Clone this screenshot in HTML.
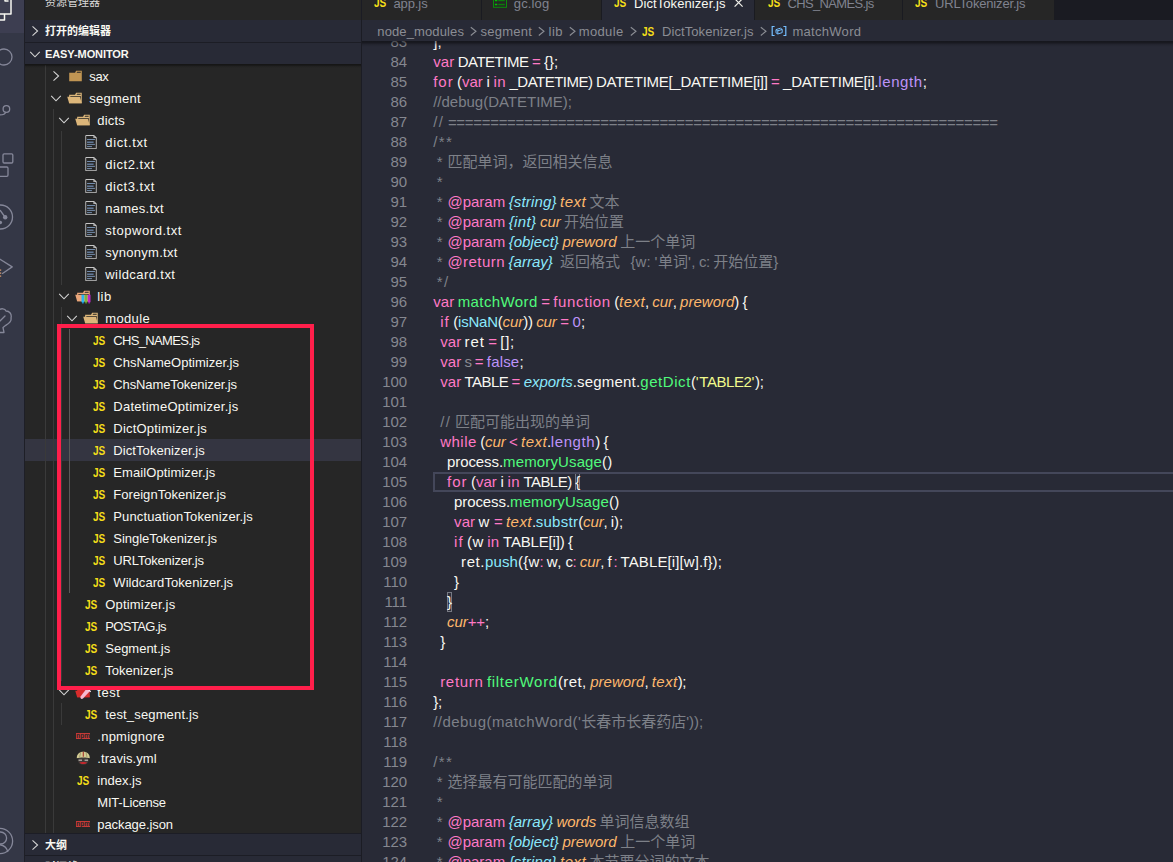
<!DOCTYPE html>
<html><head><meta charset="utf-8"><title>DictTokenizer.js - easy-monitor</title>
<style>
html,body{margin:0;padding:0}
body{width:1173px;height:862px;overflow:hidden;position:relative;background:#282a36;font-family:'Liberation Sans','Noto Sans CJK SC',sans-serif;color:#f8f8f2}
div,span,svg{position:absolute;box-sizing:border-box}
span{white-space:pre;top:0}
#act{left:0;top:0;width:24px;height:862px;background:#343746;overflow:hidden}
#actsel{left:0;top:0;width:24px;height:33px;background:#3d3e51}
#sb{left:24px;top:0;width:338px;height:862px;background:#262626;border-left:1px solid #1e1f27;border-right:1px solid #1b1c24;overflow:hidden}
.ph{left:0;width:336px;background:#282a36;font-size:11px;font-weight:bold;line-height:22px;height:22px}
.sep{left:0;width:336px;height:1px;background:#1c1d25}
#tree{left:0;top:65px;width:336px;height:768px;overflow:hidden}
.row{left:0;width:336px;height:22px;font-size:13px;line-height:22px}
.sel{background:#343541}
.g{width:1px;background:#3a3a3a}
.ga{width:1px;background:#5a5a5a}
.js{font-weight:bold;color:#f5de19;font-size:12px;transform:scaleX(.84);transform-origin:0 50%;top:.6px}
.tab span{top:1px}
.lb{top:1px}
.npm{background:#c63a38;color:#262626;font-size:6.5px;font-weight:bold;line-height:5px;height:5.6px;width:14.2px;text-align:center;letter-spacing:0}
#bc .js{top:-.5px}
#ed{left:362px;top:0;width:811px;height:862px;overflow:hidden;background:#282a36}
.ln{left:0;width:811px;height:20px;font-size:15px;line-height:20px}
.no{color:#858790;text-align:right}
.k{color:#ff79c6}.g2{color:#50fa7b}.c{color:#8be9fd}.ci{color:#8be9fd;font-style:italic}.o{color:#ffb86c;font-style:italic}
.u{color:#bd93f9}.y{color:#f1fa8c}.yq{color:#e9f284}.m{color:#7d8088}.me{color:#7d8088;top:1.4px}.d{color:#8a8c93}.p{color:#f8f8f2}
.bm{top:0;height:20px;border:1px solid #777983;background:rgba(255,255,255,.03)}
.cur{top:1px;width:2px;height:18px;background:#e8e8e0}
#cl{width:760px;height:20px;border:2px solid #44475a;border-right:0}
#tabs{left:0;top:0;width:811px;height:20px;background:#1a1b22;overflow:hidden}
.tab{top:-15px;height:35px;background:#262626;font-size:13px;line-height:35px;color:#80838f;border-right:1px solid #1a1b21}
.act{background:#282a36;color:#f8f8f2}
#bc{left:0;top:20px;width:811px;height:21px;background:#282a36;font-size:13px;line-height:24px;color:#8b8d94}
.sh{height:6px;background:linear-gradient(rgba(0,0,0,.46),rgba(0,0,0,.40) 28%,rgba(0,0,0,.13) 60%,rgba(0,0,0,0))}
#red{left:57px;top:324px;width:257px;height:366px;border:4px solid #ff1f4b}
</style></head><body>
<div id='act'><div id='actsel'></div><svg width="24" height="862" viewBox="0 0 24 862" style="left:0;top:0" fill="none" stroke-linecap="round" stroke-linejoin="round">
<g stroke="#f8f8f2" stroke-width="1.5">
<path d="M5 -2 L5 1 L8 1 M11 -2 L11 14 L-2 14"/>
<path d="M4.5 14.5 L4.5 20 L-2 20"/>
</g>
<g stroke="#858799" stroke-width="1.3">
<circle cx="4" cy="57" r="8"/>
<circle cx="6.4" cy="109" r="3.3"/>
<path d="M5.6 112.3 C5 114.5 3 115 -2 115"/>
<rect x="3" y="153.8" width="9.8" height="9.2" rx="1.2"/>
<rect x="-4" y="167" width="12" height="9.3" rx="1.2"/>
<circle cx="0.5" cy="217" r="12"/>
<path d="M5 217 L0.3 210.5"/>
<path d="M-2 258 L12.2 266.9 L2.5 273.5"/>
<path d="M-1 310 C1 308 5 308.5 6 311 C9.5 311 12 314 11 318 C12 322 8 324 5.5 325.5 L3 327.5 L4 332.5 L-2 332.5"/>
<path d="M0 321 L5 316"/>
<circle cx="0" cy="841" r="12.6"/>
<circle cx="0.6" cy="838" r="6"/>
<path d="M-2 844.6 C3 844.6 6.5 847 7.8 851.5"/>
</g>
<g fill="#858799" stroke="none"><circle cx="5.2" cy="217.2" r="2.2"/><circle cx="0.3" cy="222.5" r="1.8"/></g>
<g fill="#e0a070" stroke="none"><rect x="0" y="269.5" width="1.2" height="1.2"/><rect x="0" y="272.5" width="1.2" height="1.2"/><rect x="0" y="275.5" width="1.2" height="1.2"/></g>
</svg></div>
<div id='sb'><span style='left:20px;top:-9px;font-size:11px;line-height:22px;color:#d8d8d8'>资源管理器</span>
<div class='ph' style='top:20px'><svg style='left:2px;top:3px' width='16' height='16' viewBox='0 0 16 16' fill='none' stroke='#d6d6d6' stroke-width='1.05'><path d='M5.5 3.3 L10.6 8 L5.5 12.7'/></svg><span style='left:20px'>打开的编辑器</span></div>
<div class='sep' style='top:42px'></div><div id='tree'><div class='row' style='top:0px'><svg style='left:23px;top:3px' width='16' height='16' viewBox='0 0 16 16' fill='none' stroke='#d6d6d6' stroke-width='1.05'><path d='M5.5 3.3 L10.6 8 L5.5 12.7'/></svg><svg style='left:41.5px;top:3px' width='16' height='16' viewBox='0 0 32 32'><path d='M27.5,5.5H18.2L16.1,9.7H4.4V26.5H29.6V5.5Zm0,4.2H19.3l1.1-2.1h7.1Z' fill='#c09553'/></svg><span class='lb' style='left:64.3px;letter-spacing:-0.42px;'>sax</span></div>
<div class='row' style='top:22px'><svg style='left:23px;top:3px' width='16' height='16' viewBox='0 0 16 16' fill='none' stroke='#d6d6d6' stroke-width='1.05'><path d='M3.2 5.9 L8 10.8 L12.8 5.9'/></svg><svg style='left:41.5px;top:3px' width='16' height='16' viewBox='0 0 32 32'><path d='M27.4,5.5H18.2L16.1,9.7H4.3V26.5H29.5V5.5Zm0,18.7H6.6V11.8H27.4Zm0-14.5H19.2l1-2.1h7.1V9.7Z' fill='#dcb67a'/><polygon points='25.7 13.7 0.5 13.7 4.3 26.5 29.5 26.5 25.7 13.7' fill='#dcb67a'/></svg><span class='lb' style='left:64.3px;letter-spacing:0.23px;'>segment</span></div>
<div class='row' style='top:44px'><svg style='left:31px;top:3px' width='16' height='16' viewBox='0 0 16 16' fill='none' stroke='#d6d6d6' stroke-width='1.05'><path d='M3.2 5.9 L8 10.8 L12.8 5.9'/></svg><svg style='left:49.5px;top:3px' width='16' height='16' viewBox='0 0 32 32'><path d='M27.4,5.5H18.2L16.1,9.7H4.3V26.5H29.5V5.5Zm0,18.7H6.6V11.8H27.4Zm0-14.5H19.2l1-2.1h7.1V9.7Z' fill='#dcb67a'/><polygon points='25.7 13.7 0.5 13.7 4.3 26.5 29.5 26.5 25.7 13.7' fill='#dcb67a'/></svg><span class='lb' style='left:72.3px;letter-spacing:0.19px;'>dicts</span></div>
<div class='row' style='top:66px'><svg style='left:57.5px;top:3px' width='16' height='16' viewBox='0 0 32 32'><path d='M22.038,2H6.375a1.755,1.755,0,0,0-1.75,1.75v24.5A1.755,1.755,0,0,0,6.375,30h19.25a1.755,1.755,0,0,0,1.75-1.75V6.856Zm.525,2.844,1.663,1.531H22.563ZM6.375,28.25V3.75H20.813V8.125h4.813V28.25Z' fill='#c5c5c5'/><rect x='8.125' y='15.097' width='13.076' height='2.6' fill='#6f89ad'/><rect x='8.125' y='24.439' width='9.762' height='1.75' fill='#829ec2'/><rect x='8.125' y='19.763' width='15.75' height='1.75' fill='#829ec2'/><rect x='8.125' y='10.23' width='15.75' height='1.75' fill='#829ec2'/></svg><span class='lb' style='left:80.3px;letter-spacing:0.61px;'>dict.txt</span></div>
<div class='row' style='top:88px'><svg style='left:57.5px;top:3px' width='16' height='16' viewBox='0 0 32 32'><path d='M22.038,2H6.375a1.755,1.755,0,0,0-1.75,1.75v24.5A1.755,1.755,0,0,0,6.375,30h19.25a1.755,1.755,0,0,0,1.75-1.75V6.856Zm.525,2.844,1.663,1.531H22.563ZM6.375,28.25V3.75H20.813V8.125h4.813V28.25Z' fill='#c5c5c5'/><rect x='8.125' y='15.097' width='13.076' height='2.6' fill='#6f89ad'/><rect x='8.125' y='24.439' width='9.762' height='1.75' fill='#829ec2'/><rect x='8.125' y='19.763' width='15.75' height='1.75' fill='#829ec2'/><rect x='8.125' y='10.23' width='15.75' height='1.75' fill='#829ec2'/></svg><span class='lb' style='left:80.3px;letter-spacing:0.54px;'>dict2.txt</span></div>
<div class='row' style='top:110px'><svg style='left:57.5px;top:3px' width='16' height='16' viewBox='0 0 32 32'><path d='M22.038,2H6.375a1.755,1.755,0,0,0-1.75,1.75v24.5A1.755,1.755,0,0,0,6.375,30h19.25a1.755,1.755,0,0,0,1.75-1.75V6.856Zm.525,2.844,1.663,1.531H22.563ZM6.375,28.25V3.75H20.813V8.125h4.813V28.25Z' fill='#c5c5c5'/><rect x='8.125' y='15.097' width='13.076' height='2.6' fill='#6f89ad'/><rect x='8.125' y='24.439' width='9.762' height='1.75' fill='#829ec2'/><rect x='8.125' y='19.763' width='15.75' height='1.75' fill='#829ec2'/><rect x='8.125' y='10.23' width='15.75' height='1.75' fill='#829ec2'/></svg><span class='lb' style='left:80.3px;letter-spacing:0.54px;'>dict3.txt</span></div>
<div class='row' style='top:132px'><svg style='left:57.5px;top:3px' width='16' height='16' viewBox='0 0 32 32'><path d='M22.038,2H6.375a1.755,1.755,0,0,0-1.75,1.75v24.5A1.755,1.755,0,0,0,6.375,30h19.25a1.755,1.755,0,0,0,1.75-1.75V6.856Zm.525,2.844,1.663,1.531H22.563ZM6.375,28.25V3.75H20.813V8.125h4.813V28.25Z' fill='#c5c5c5'/><rect x='8.125' y='15.097' width='13.076' height='2.6' fill='#6f89ad'/><rect x='8.125' y='24.439' width='9.762' height='1.75' fill='#829ec2'/><rect x='8.125' y='19.763' width='15.75' height='1.75' fill='#829ec2'/><rect x='8.125' y='10.23' width='15.75' height='1.75' fill='#829ec2'/></svg><span class='lb' style='left:80.3px;letter-spacing:0.25px;'>names.txt</span></div>
<div class='row' style='top:154px'><svg style='left:57.5px;top:3px' width='16' height='16' viewBox='0 0 32 32'><path d='M22.038,2H6.375a1.755,1.755,0,0,0-1.75,1.75v24.5A1.755,1.755,0,0,0,6.375,30h19.25a1.755,1.755,0,0,0,1.75-1.75V6.856Zm.525,2.844,1.663,1.531H22.563ZM6.375,28.25V3.75H20.813V8.125h4.813V28.25Z' fill='#c5c5c5'/><rect x='8.125' y='15.097' width='13.076' height='2.6' fill='#6f89ad'/><rect x='8.125' y='24.439' width='9.762' height='1.75' fill='#829ec2'/><rect x='8.125' y='19.763' width='15.75' height='1.75' fill='#829ec2'/><rect x='8.125' y='10.23' width='15.75' height='1.75' fill='#829ec2'/></svg><span class='lb' style='left:80.3px;letter-spacing:0.55px;'>stopword.txt</span></div>
<div class='row' style='top:176px'><svg style='left:57.5px;top:3px' width='16' height='16' viewBox='0 0 32 32'><path d='M22.038,2H6.375a1.755,1.755,0,0,0-1.75,1.75v24.5A1.755,1.755,0,0,0,6.375,30h19.25a1.755,1.755,0,0,0,1.75-1.75V6.856Zm.525,2.844,1.663,1.531H22.563ZM6.375,28.25V3.75H20.813V8.125h4.813V28.25Z' fill='#c5c5c5'/><rect x='8.125' y='15.097' width='13.076' height='2.6' fill='#6f89ad'/><rect x='8.125' y='24.439' width='9.762' height='1.75' fill='#829ec2'/><rect x='8.125' y='19.763' width='15.75' height='1.75' fill='#829ec2'/><rect x='8.125' y='10.23' width='15.75' height='1.75' fill='#829ec2'/></svg><span class='lb' style='left:80.3px;letter-spacing:0.27px;'>synonym.txt</span></div>
<div class='row' style='top:198px'><svg style='left:57.5px;top:3px' width='16' height='16' viewBox='0 0 32 32'><path d='M22.038,2H6.375a1.755,1.755,0,0,0-1.75,1.75v24.5A1.755,1.755,0,0,0,6.375,30h19.25a1.755,1.755,0,0,0,1.75-1.75V6.856Zm.525,2.844,1.663,1.531H22.563ZM6.375,28.25V3.75H20.813V8.125h4.813V28.25Z' fill='#c5c5c5'/><rect x='8.125' y='15.097' width='13.076' height='2.6' fill='#6f89ad'/><rect x='8.125' y='24.439' width='9.762' height='1.75' fill='#829ec2'/><rect x='8.125' y='19.763' width='15.75' height='1.75' fill='#829ec2'/><rect x='8.125' y='10.23' width='15.75' height='1.75' fill='#829ec2'/></svg><span class='lb' style='left:80.3px;letter-spacing:0.42px;'>wildcard.txt</span></div>
<div class='row' style='top:220px'><svg style='left:31px;top:3px' width='16' height='16' viewBox='0 0 16 16' fill='none' stroke='#d6d6d6' stroke-width='1.05'><path d='M3.2 5.9 L8 10.8 L12.8 5.9'/></svg><svg style='left:49.5px;top:3px' width='16' height='16' viewBox='0 0 32 32'><path d='M27.4,5.5H18.2L16.1,9.7H4.3V26.5H29.5V5.5Zm0,18.7H6.6V11.8H27.4Zm0-14.5H19.2l1-2.1h7.1V9.7Z' fill='#eaa67a'/><polygon points='25.7 13.7 0.5 13.7 4.3 26.5 29.5 26.5 25.7 13.7' fill='#eaa67a'/><rect x='13' y='13.5' width='5.6' height='15' fill='#29b6f6'/><rect x='19.4' y='13.5' width='5.4' height='15' fill='#7cb342'/><rect x='25.6' y='13.5' width='5.4' height='15' fill='#c026c9'/><rect x='14.3' y='28' width='3' height='3' fill='#1e9fe0'/><rect x='20.6' y='28' width='3' height='3' fill='#62a030'/><rect x='26.8' y='28' width='3' height='3' fill='#a320ab'/></svg><span class='lb' style='left:72.3px;letter-spacing:0.41px;'>lib</span></div>
<div class='row' style='top:242px'><svg style='left:39px;top:3px' width='16' height='16' viewBox='0 0 16 16' fill='none' stroke='#d6d6d6' stroke-width='1.05'><path d='M3.2 5.9 L8 10.8 L12.8 5.9'/></svg><svg style='left:57.5px;top:3px' width='16' height='16' viewBox='0 0 32 32'><path d='M27.4,5.5H18.2L16.1,9.7H4.3V26.5H29.5V5.5Zm0,18.7H6.6V11.8H27.4Zm0-14.5H19.2l1-2.1h7.1V9.7Z' fill='#dcb67a'/><polygon points='25.7 13.7 0.5 13.7 4.3 26.5 29.5 26.5 25.7 13.7' fill='#dcb67a'/></svg><span class='lb' style='left:80.3px;letter-spacing:0.34px;'>module</span></div>
<div class='row' style='top:264px'><span class='js' style='left:67.7px'>JS</span><span class='lb' style='left:88.3px;letter-spacing:-0.66px;'>CHS_NAMES.js</span></div>
<div class='row' style='top:286px'><span class='js' style='left:67.7px'>JS</span><span class='lb' style='left:88.3px;'>ChsNameOptimizer.js</span></div>
<div class='row' style='top:308px'><span class='js' style='left:67.7px'>JS</span><span class='lb' style='left:88.3px;letter-spacing:-0.11px;'>ChsNameTokenizer.js</span></div>
<div class='row' style='top:330px'><span class='js' style='left:67.7px'>JS</span><span class='lb' style='left:88.3px;letter-spacing:0.26px;'>DatetimeOptimizer.js</span></div>
<div class='row' style='top:352px'><span class='js' style='left:67.7px'>JS</span><span class='lb' style='left:88.3px;letter-spacing:0.21px;'>DictOptimizer.js</span></div>
<div class='row sel' style='top:374px'><span class='js' style='left:67.7px'>JS</span><span class='lb' style='left:88.3px;letter-spacing:0.08px;'>DictTokenizer.js</span></div>
<div class='row' style='top:396px'><span class='js' style='left:67.7px'>JS</span><span class='lb' style='left:88.3px;letter-spacing:0.09px;'>EmailOptimizer.js</span></div>
<div class='row' style='top:418px'><span class='js' style='left:67.7px'>JS</span><span class='lb' style='left:88.3px;letter-spacing:0.04px;'>ForeignTokenizer.js</span></div>
<div class='row' style='top:440px'><span class='js' style='left:67.7px'>JS</span><span class='lb' style='left:88.3px;letter-spacing:0.13px;'>PunctuationTokenizer.js</span></div>
<div class='row' style='top:462px'><span class='js' style='left:67.7px'>JS</span><span class='lb' style='left:88.3px;letter-spacing:-0.02px;'>SingleTokenizer.js</span></div>
<div class='row' style='top:484px'><span class='js' style='left:67.7px'>JS</span><span class='lb' style='left:88.3px;letter-spacing:-0.17px;'>URLTokenizer.js</span></div>
<div class='row' style='top:506px'><span class='js' style='left:67.7px'>JS</span><span class='lb' style='left:88.3px;letter-spacing:0.07px;'>WildcardTokenizer.js</span></div>
<div class='row' style='top:528px'><span class='js' style='left:59.7px'>JS</span><span class='lb' style='left:80.3px;letter-spacing:0.18px;'>Optimizer.js</span></div>
<div class='row' style='top:550px'><span class='js' style='left:59.7px'>JS</span><span class='lb' style='left:80.3px;letter-spacing:-0.62px;'>POSTAG.js</span></div>
<div class='row' style='top:572px'><span class='js' style='left:59.7px'>JS</span><span class='lb' style='left:80.3px;letter-spacing:-0.02px;'>Segment.js</span></div>
<div class='row' style='top:594px'><span class='js' style='left:59.7px'>JS</span><span class='lb' style='left:80.3px;letter-spacing:0.01px;'>Tokenizer.js</span></div>
<div class='row' style='top:616px'><svg style='left:31px;top:3px' width='16' height='16' viewBox='0 0 16 16' fill='none' stroke='#d6d6d6' stroke-width='1.05'><path d='M3.2 5.9 L8 10.8 L12.8 5.9'/></svg><svg style='left:49.5px;top:3px' width='16' height='16' viewBox='0 0 32 32'><path d='M27.4,5.5H18.2L16.1,9.7H4.3V26.5H29.5V5.5Z' fill='#d32f2f'/><polygon points='25.7 13.7 0.5 13.7 4.3 26.5 29.5 26.5 25.7 13.7' fill='#d92b2b'/><path d='M24 8 L30 14 L16 29 C13 31.5 9 28 11.5 24.5 Z' fill='#f8bbd0'/><path d='M22 6 L31.5 15.5' stroke='#fce4ec' stroke-width='2.4'/></svg><span class='lb' style='left:72.3px;letter-spacing:0.54px;'>test</span></div>
<div class='row' style='top:638px'><span class='js' style='left:59.7px'>JS</span><span class='lb' style='left:80.3px;letter-spacing:0.15px;'>test_segment.js</span></div>
<div class='row' style='top:660px'><span class='npm' style='left:51.0px;top:8.2px'>npm</span><span class='lb' style='left:72.3px;letter-spacing:0.25px;'>.npmignore</span></div>
<div class='row' style='top:682px'><svg style='left:49.5px;top:3px' width='16' height='16' viewBox='0 0 16 16'><ellipse cx='8.3' cy='10.2' rx='5.4' ry='4.6' fill='#3f3a38'/><path d='M1.8 8.3 C1.6 4.2 4.4 1.7 8.3 1.7 C12.2 1.7 15 4.2 14.8 8.3 C12 7.2 4.6 7.2 1.8 8.3 Z' fill='#d3cb93'/><path d='M8.3 1.7 V6.8' stroke='#a8372c' stroke-width='1.1'/><path d='M5.6 2.4 L4.6 7.2 M11 2.4 L12 7.2' stroke='#8d875f' stroke-width='.7'/><path d='M3.6 9.4 h3.4 v1.6 h-3.4z M9.6 9.4 h3.4 v1.6 h-3.4z' fill='#a39f9a'/><path d='M4.6 12.6 C6 11.9 10.6 11.9 12 12.6 C11 14.6 5.6 14.6 4.6 12.6Z' fill='#c4272d'/></svg><span class='lb' style='left:72.3px;letter-spacing:0.08px;'>.travis.yml</span></div>
<div class='row' style='top:704px'><span class='js' style='left:51.7px'>JS</span><span class='lb' style='left:72.3px;letter-spacing:0.01px;'>index.js</span></div>
<div class='row' style='top:726px'><span class='lb' style='left:72.3px;letter-spacing:-0.20px;'>MIT-License</span></div>
<div class='row' style='top:748px'><span class='npm' style='left:51.0px;top:8.2px'>npm</span><span class='lb' style='left:72.3px;letter-spacing:-0.08px;'>package.json</span></div>
<div class='g' style='left:20px;top:0px;height:770px'></div><div class='g' style='left:28px;top:44px;height:726px'></div><div class='g' style='left:36px;top:66px;height:154px'></div><div class='g' style='left:36px;top:242px;height:374px'></div><div class='g' style='left:36px;top:638px;height:22px'></div><div class='ga' style='left:44px;top:264px;height:264px'></div></div>
<div class='ph' style='top:43px;height:21px'><svg style='left:2px;top:3px' width='16' height='16' viewBox='0 0 16 16' fill='none' stroke='#d6d6d6' stroke-width='1.05'><path d='M3.2 5.9 L8 10.8 L12.8 5.9'/></svg><span style='left:20.0px;letter-spacing:-0.09px;'>EASY-MONITOR</span></div><div class='sh' style='left:0;top:64px;width:336px;height:4px'></div>
<div class='sep' style='top:833px'></div><div class='ph' style='top:834px'><svg style='left:2px;top:3px' width='16' height='16' viewBox='0 0 16 16' fill='none' stroke='#d6d6d6' stroke-width='1.05'><path d='M5.5 3.3 L10.6 8 L5.5 12.7'/></svg><span style='left:20px'>大纲</span></div>
<div class='sep' style='top:855px'></div><div class='ph' style='top:856px'><svg style='left:2px;top:3px' width='16' height='16' viewBox='0 0 16 16' fill='none' stroke='#d6d6d6' stroke-width='1.05'><path d='M5.5 3.3 L10.6 8 L5.5 12.7'/></svg><span style='left:20px'>时间线</span></div>
</div>
<div id='ed'><div class='ln' style='top:32px'><span class='no' style='left:0;width:45.2px'>83</span><span class='p' style='left:71.2px;letter-spacing:0.11px'>];</span></div>
<div class='ln' style='top:52px'><span class='no' style='left:0;width:45.2px'>84</span><span class='k' style='left:71.2px;letter-spacing:0.05px'>var </span><span class='p' style='left:95.7px;letter-spacing:-0.50px'>DATETIME </span><span class='k' style='left:169.9px;letter-spacing:-0.18px'>= </span><span class='p' style='left:182.0px;letter-spacing:0.05px'>{};</span></div>
<div class='ln' style='top:72px'><span class='no' style='left:0;width:45.2px'>85</span><span class='k' style='left:71.2px;letter-spacing:0.98px'>for </span><span class='p' style='left:95.1px;letter-spacing:-0.20px'>(</span><span class='k' style='left:99.9px;letter-spacing:0.05px'>var </span><span class='p' style='left:124.4px;letter-spacing:0.36px'>i </span><span class='k' style='left:131.6px;letter-spacing:0.35px'>in </span><span class='p' style='left:147.5px;letter-spacing:-0.51px'>_DATETIME) </span><span class='p' style='left:234.0px;letter-spacing:-0.28px'>DATETIME[_DATETIME[i]] </span><span class='k' style='left:409.1px;letter-spacing:-0.18px'>= </span><span class='p' style='left:421.1px;letter-spacing:-0.29px'>_DATETIME[i].</span><span class='u' style='left:516.3px;letter-spacing:0.60px'>length</span><span class='p' style='left:560.7px;letter-spacing:-0.42px'>;</span></div>
<div class='ln' style='top:92px'><span class='no' style='left:0;width:45.2px'>86</span><span class='m' style='left:71.2px;letter-spacing:-0.01px'>//debug(DATETIME);</span></div>
<div class='ln' style='top:112px'><span class='no' style='left:0;width:45.2px'>87</span><span class='m' style='left:71.2px;letter-spacing:1.43px'>// </span><span class='me' style='left:85.9px;letter-spacing:-0.30px'>=================================================================</span></div>
<div class='ln' style='top:132px'><span class='no' style='left:0;width:45.2px'>88</span><span class='m' style='left:71.2px;letter-spacing:1.40px'>/**</span></div>
<div class='ln' style='top:152px'><span class='no' style='left:0;width:45.2px'>89</span><span class='m' style='left:74.7px;letter-spacing:1.40px'>* </span><span class='m' style='left:85.4px;'>匹配单词，返回相关信息</span></div>
<div class='ln' style='top:172px'><span class='no' style='left:0;width:45.2px'>90</span><span class='m' style='left:74.7px;letter-spacing:1.40px'>*</span></div>
<div class='ln' style='top:192px'><span class='no' style='left:0;width:45.2px'>91</span><span class='m' style='left:74.7px;letter-spacing:1.40px'>* </span><span class='k' style='left:85.4px;letter-spacing:0.01px'>@param </span><span class='ci' style='left:146.7px;letter-spacing:0.16px'>{string} </span><span class='o' style='left:198.1px;letter-spacing:0.44px'>text </span><span class='m' style='left:227.6px;'>文本</span></div>
<div class='ln' style='top:212px'><span class='no' style='left:0;width:45.2px'>92</span><span class='m' style='left:74.7px;letter-spacing:1.40px'>* </span><span class='k' style='left:85.4px;letter-spacing:0.01px'>@param </span><span class='ci' style='left:146.7px;letter-spacing:0.39px'>{int} </span><span class='o' style='left:178.0px;letter-spacing:-0.09px'>cur </span><span class='m' style='left:202.0px;'>开始位置</span></div>
<div class='ln' style='top:232px'><span class='no' style='left:0;width:45.2px'>93</span><span class='m' style='left:74.7px;letter-spacing:1.40px'>* </span><span class='k' style='left:85.4px;letter-spacing:0.01px'>@param </span><span class='ci' style='left:146.7px;letter-spacing:0.02px'>{object} </span><span class='o' style='left:200.4px;letter-spacing:0.01px'>preword </span><span class='m' style='left:258.2px;'>上一个单词</span></div>
<div class='ln' style='top:252px'><span class='no' style='left:0;width:45.2px'>94</span><span class='m' style='left:74.7px;letter-spacing:1.40px'>* </span><span class='k' style='left:85.4px;letter-spacing:0.46px'>@return </span><span class='ci' style='left:146.5px;letter-spacing:0.03px'>{array} </span><span class='m' style='left:197.9px;'>返回格式</span><span class='m' style='left:268.4px;letter-spacing:0.17px'>{w: </span><span class='m' style='left:292.4px;letter-spacing:0.80px'>&#x27;</span><span class='m' style='left:296.1px;'>单词</span><span class='m' style='left:326.1px;letter-spacing:0.19px'>&#x27;, </span><span class='m' style='left:337.0px;letter-spacing:-0.42px'>c: </span><span class='m' style='left:351.3px;'>开始位置</span><span class='m' style='left:411.3px;letter-spacing:-0.06px'>}</span></div>
<div class='ln' style='top:272px'><span class='no' style='left:0;width:45.2px'>95</span><span class='m' style='left:74.7px;letter-spacing:1.41px'>*/</span></div>
<div class='ln' style='top:292px'><span class='no' style='left:0;width:45.2px'>96</span><span class='k' style='left:71.2px;letter-spacing:0.05px'>var </span><span class='g2' style='left:95.7px;letter-spacing:0.40px'>matchWord </span><span class='k' style='left:179.2px;letter-spacing:-0.18px'>= </span><span class='k' style='left:191.3px;letter-spacing:0.62px'>function </span><span class='p' style='left:252.3px;letter-spacing:-0.20px'>(</span><span class='o' style='left:257.1px;letter-spacing:0.44px'>text</span><span class='p' style='left:283.0px;letter-spacing:-0.42px'>, </span><span class='o' style='left:290.3px;letter-spacing:-0.09px'>cur</span><span class='p' style='left:310.8px;letter-spacing:-0.42px'>, </span><span class='o' style='left:318.1px;letter-spacing:0.01px'>preword</span><span class='p' style='left:372.3px;letter-spacing:-0.20px'>) </span><span class='p' style='left:380.6px;letter-spacing:-0.06px'>{</span></div>
<div class='ln' style='top:312px'><span class='no' style='left:0;width:45.2px'>97</span><span class='k' style='left:78.2px;letter-spacing:1.00px'>if </span><span class='p' style='left:91.2px;letter-spacing:-0.20px'>(</span><span class='c' style='left:96.0px;letter-spacing:-0.20px'>isNaN</span><span class='p' style='left:135.8px;letter-spacing:-0.20px'>(</span><span class='o' style='left:140.6px;letter-spacing:-0.09px'>cur</span><span class='p' style='left:161.2px;letter-spacing:-0.21px'>)) </span><span class='o' style='left:174.2px;letter-spacing:-0.09px'>cur </span><span class='k' style='left:198.3px;letter-spacing:-0.18px'>= </span><span class='u' style='left:210.4px;letter-spacing:0.24px'>0</span><span class='p' style='left:219.0px;letter-spacing:-0.42px'>;</span></div>
<div class='ln' style='top:332px'><span class='no' style='left:0;width:45.2px'>98</span><span class='k' style='left:78.2px;letter-spacing:0.05px'>var </span><span class='p' style='left:102.6px;letter-spacing:0.87px'>ret </span><span class='k' style='left:126.3px;letter-spacing:-0.18px'>= </span><span class='p' style='left:138.3px;letter-spacing:0.70px'>[];</span></div>
<div class='ln' style='top:352px'><span class='no' style='left:0;width:45.2px'>99</span><span class='k' style='left:78.2px;letter-spacing:0.05px'>var </span><span class='d' style='left:102.6px;letter-spacing:-0.89px'>s </span><span class='k' style='left:112.7px;letter-spacing:-0.18px'>= </span><span class='u' style='left:124.8px;letter-spacing:0.18px'>false</span><span class='p' style='left:157.4px;letter-spacing:-0.42px'>;</span></div>
<div class='ln' style='top:372px'><span class='no' style='left:0;width:45.2px'>100</span><span class='k' style='left:78.2px;letter-spacing:0.05px'>var </span><span class='p' style='left:102.6px;letter-spacing:-0.59px'>TABLE </span><span class='k' style='left:149.6px;letter-spacing:-0.18px'>= </span><span class='ci' style='left:161.7px;letter-spacing:-0.03px'>exports</span><span class='p' style='left:210.7px;letter-spacing:0.19px'>.segment.</span><span class='g2' style='left:278.3px;letter-spacing:0.56px'>getDict</span><span class='p' style='left:328.9px;letter-spacing:-0.20px'>(</span><span class='yq' style='left:333.7px;letter-spacing:0.80px'>&#x27;</span><span class='y' style='left:337.3px;letter-spacing:-0.45px'>TABLE2</span><span class='yq' style='left:389.4px;letter-spacing:0.80px'>&#x27;</span><span class='p' style='left:393.1px;letter-spacing:-0.32px'>);</span></div>
<div class='ln' style='top:392px'><span class='no' style='left:0;width:45.2px'>101</span></div>
<div class='ln' style='top:412px'><span class='no' style='left:0;width:45.2px'>102</span><span class='m' style='left:78.2px;letter-spacing:1.43px'>// </span><span class='m' style='left:92.9px;'>匹配可能出现的单词</span></div>
<div class='ln' style='top:432px'><span class='no' style='left:0;width:45.2px'>103</span><span class='k' style='left:78.2px;letter-spacing:0.48px'>while </span><span class='p' style='left:118.2px;letter-spacing:-0.20px'>(</span><span class='o' style='left:123.0px;letter-spacing:-0.09px'>cur </span><span class='k' style='left:147.1px;letter-spacing:-0.18px'>&lt; </span><span class='o' style='left:159.1px;letter-spacing:0.44px'>text</span><span class='p' style='left:185.1px;letter-spacing:-0.42px'>.</span><span class='u' style='left:188.8px;letter-spacing:0.60px'>length</span><span class='p' style='left:233.3px;letter-spacing:-0.20px'>) </span><span class='p' style='left:241.6px;letter-spacing:-0.06px'>{</span></div>
<div class='ln' style='top:452px'><span class='no' style='left:0;width:45.2px'>104</span><span class='p' style='left:85.1px;letter-spacing:-0.10px'>process.</span><span class='g2' style='left:141.1px;letter-spacing:0.13px'>memoryUsage</span><span class='p' style='left:240.0px;letter-spacing:0.14px'>()</span></div>
<div class='ln' style='top:472px'><span class='no' style='left:0;width:45.2px'>105</span><span class='k' style='left:85.1px;letter-spacing:0.98px'>for </span><span class='p' style='left:109.1px;letter-spacing:-0.20px'>(</span><span class='k' style='left:113.9px;letter-spacing:0.05px'>var </span><span class='p' style='left:138.4px;letter-spacing:0.36px'>i </span><span class='k' style='left:145.6px;letter-spacing:0.35px'>in </span><span class='p' style='left:161.4px;letter-spacing:-0.53px'>TABLE) </span><div class='bm' style='left:213.0px;width:5.4px'></div><span class='p' style='left:213.2px;letter-spacing:-0.06px'>{</span></div>
<div class='ln' style='top:492px'><span class='no' style='left:0;width:45.2px'>106</span><span class='p' style='left:92.1px;letter-spacing:-0.10px'>process.</span><span class='g2' style='left:148.0px;letter-spacing:0.13px'>memoryUsage</span><span class='p' style='left:247.0px;letter-spacing:0.14px'>()</span></div>
<div class='ln' style='top:512px'><span class='no' style='left:0;width:45.2px'>107</span><span class='k' style='left:92.1px;letter-spacing:0.05px'>var </span><span class='p' style='left:116.6px;letter-spacing:0.96px'>w </span><span class='k' style='left:131.9px;letter-spacing:-0.18px'>= </span><span class='o' style='left:144.0px;letter-spacing:0.44px'>text</span><span class='p' style='left:169.9px;letter-spacing:-0.42px'>.</span><span class='c' style='left:173.7px;letter-spacing:0.28px'>substr</span><span class='p' style='left:216.2px;letter-spacing:-0.20px'>(</span><span class='o' style='left:221.0px;letter-spacing:-0.09px'>cur</span><span class='p' style='left:241.6px;letter-spacing:-0.42px'>, </span><span class='p' style='left:248.8px;letter-spacing:-0.08px'>i);</span></div>
<div class='ln' style='top:532px'><span class='no' style='left:0;width:45.2px'>108</span><span class='k' style='left:92.1px;letter-spacing:1.00px'>if </span><span class='p' style='left:105.1px;letter-spacing:0.38px'>(w </span><span class='k' style='left:125.2px;letter-spacing:0.35px'>in </span><span class='p' style='left:141.1px;letter-spacing:-0.19px'>TABLE[i]) </span><span class='p' style='left:206.0px;letter-spacing:-0.06px'>{</span></div>
<div class='ln' style='top:552px'><span class='no' style='left:0;width:45.2px'>109</span><span class='p' style='left:99.1px;letter-spacing:0.59px'>ret.</span><span class='c' style='left:123.1px;letter-spacing:0.09px'>push</span><span class='p' style='left:156.0px;letter-spacing:0.23px'>({w</span><span class='k' style='left:177.6px;letter-spacing:-0.42px'>: </span><span class='p' style='left:184.8px;letter-spacing:0.50px'>w, </span><span class='p' style='left:203.5px;letter-spacing:-0.42px'>c</span><span class='k' style='left:210.5px;letter-spacing:-0.42px'>: </span><span class='o' style='left:217.8px;letter-spacing:-0.09px'>cur</span><span class='p' style='left:238.3px;letter-spacing:-0.42px'>, </span><span class='p' style='left:245.6px;letter-spacing:1.63px'>f</span><span class='k' style='left:251.4px;letter-spacing:-0.42px'>: </span><span class='p' style='left:258.6px;letter-spacing:0.10px'>TABLE[i][w].f});</span></div>
<div class='ln' style='top:572px'><span class='no' style='left:0;width:45.2px'>110</span><span class='p' style='left:92.1px;letter-spacing:-0.06px'>}</span></div>
<div class='ln' style='top:592px'><span class='no' style='left:0;width:45.2px'>111</span><div class='bm' style='left:84.9px;width:5.4px'></div><span class='p' style='left:85.1px;letter-spacing:-0.06px'>}</span></div>
<div class='ln' style='top:612px'><span class='no' style='left:0;width:45.2px'>112</span><span class='o' style='left:85.1px;letter-spacing:-0.09px'>cur</span><span class='k' style='left:105.7px;letter-spacing:-0.19px'>++</span><span class='p' style='left:122.9px;letter-spacing:-0.42px'>;</span></div>
<div class='ln' style='top:632px'><span class='no' style='left:0;width:45.2px'>113</span><span class='p' style='left:78.2px;letter-spacing:-0.06px'>}</span></div>
<div class='ln' style='top:652px'><span class='no' style='left:0;width:45.2px'>114</span></div>
<div class='ln' style='top:672px'><span class='no' style='left:0;width:45.2px'>115</span><span class='k' style='left:78.2px;letter-spacing:0.68px'>return </span><span class='g2' style='left:124.9px;letter-spacing:0.71px'>filterWord</span><span class='p' style='left:195.9px;letter-spacing:0.43px'>(ret, </span><span class='o' style='left:228.2px;letter-spacing:0.01px'>preword</span><span class='p' style='left:282.5px;letter-spacing:-0.42px'>, </span><span class='o' style='left:289.7px;letter-spacing:0.44px'>text</span><span class='p' style='left:315.7px;letter-spacing:-0.32px'>);</span></div>
<div class='ln' style='top:692px'><span class='no' style='left:0;width:45.2px'>116</span><span class='p' style='left:71.2px;letter-spacing:-0.24px'>};</span></div>
<div class='ln' style='top:712px'><span class='no' style='left:0;width:45.2px'>117</span><span class='m' style='left:71.2px;letter-spacing:0.46px'>//debug(matchWord(&#x27;</span><span class='m' style='left:219.2px;'>长春市长春药店</span><span class='m' style='left:324.2px;letter-spacing:-0.01px'>&#x27;));</span></div>
<div class='ln' style='top:732px'><span class='no' style='left:0;width:45.2px'>118</span></div>
<div class='ln' style='top:752px'><span class='no' style='left:0;width:45.2px'>119</span><span class='m' style='left:71.2px;letter-spacing:1.40px'>/**</span></div>
<div class='ln' style='top:772px'><span class='no' style='left:0;width:45.2px'>120</span><span class='m' style='left:74.7px;letter-spacing:1.40px'>* </span><span class='m' style='left:85.4px;'>选择最有可能匹配的单词</span></div>
<div class='ln' style='top:792px'><span class='no' style='left:0;width:45.2px'>121</span><span class='m' style='left:74.7px;letter-spacing:1.40px'>*</span></div>
<div class='ln' style='top:812px'><span class='no' style='left:0;width:45.2px'>122</span><span class='m' style='left:74.7px;letter-spacing:1.40px'>* </span><span class='k' style='left:85.4px;letter-spacing:0.01px'>@param </span><span class='ci' style='left:146.7px;letter-spacing:0.03px'>{array} </span><span class='o' style='left:194.6px;letter-spacing:-0.10px'>words </span><span class='m' style='left:237.6px;'>单词信息数组</span></div>
<div class='ln' style='top:832px'><span class='no' style='left:0;width:45.2px'>123</span><span class='m' style='left:74.7px;letter-spacing:1.40px'>* </span><span class='k' style='left:85.4px;letter-spacing:0.01px'>@param </span><span class='ci' style='left:146.7px;letter-spacing:0.02px'>{object} </span><span class='o' style='left:200.4px;letter-spacing:0.01px'>preword </span><span class='m' style='left:258.2px;'>上一个单词</span></div>
<div class='ln' style='top:852px'><span class='no' style='left:0;width:45.2px'>124</span><span class='m' style='left:74.7px;letter-spacing:1.40px'>* </span><span class='k' style='left:85.4px;letter-spacing:0.01px'>@param </span><span class='ci' style='left:146.7px;letter-spacing:0.16px'>{string} </span><span class='o' style='left:198.1px;letter-spacing:0.44px'>text </span><span class='m' style='left:227.6px;'>本节要分词的文本</span></div>
<div id='cl' style='left:70.69999999999999px;top:472px'></div><div id='tabs'><div class='tab' style='left:0px;width:120px'><span class='js' style='left:11.800000000000011px'>JS</span><span style='left:31.5px;letter-spacing:-0.11px;'>app.js</span></div><div class='tab' style='left:120px;width:120px'><svg style='left:10px;top:8.2px' width='16' height='16' viewBox='0 0 16 16' fill='none'><rect x='1.5' y='1.5' width='13' height='12.8' stroke='#0b8c0b' stroke-width='1'/><path d='M2.9 3.5h2.4M2.9 7.5h2.4M2.9 11.5h2.4' stroke='#00c400' stroke-width='1.7'/><path d='M6.3 3.5h6.5M6.3 7.5h6.5M6.3 11.5h6.5' stroke='#0a7d0a' stroke-width='1.5'/></svg><span style='left:31.8px;letter-spacing:0.14px;'>gc.log</span></div><div class='tab act' style='left:240px;width:153px'><span class='js' style='left:12.200000000000045px'>JS</span><span style='left:32.0px;letter-spacing:0.08px;'>DictTokenizer.js</span><svg style='left:132px;top:9.3px' width='16' height='16' viewBox='0 0 16 16' fill='none' stroke='#f0f0ea' stroke-width='1.2'><path d='M0.6 4.6 L8.6 12.6 M8.6 4.6 L0.6 12.6'/></svg></div><div class='tab' style='left:393px;width:148px'><span class='js' style='left:12.600000000000023px'>JS</span><span style='left:32.5px;letter-spacing:-0.66px;'>CHS_NAMES.js</span></div><div class='tab' style='left:541px;width:152px'><span class='js' style='left:12.200000000000045px'>JS</span><span style='left:32.0px;letter-spacing:-0.17px;'>URLTokenizer.js</span></div></div>
<div id='bc'><span style='left:15.3px;letter-spacing:0.12px;'>node_modules</span><svg style='left:108px;top:3px' width='8' height='16' viewBox='0 0 8 16' fill='none' stroke='#8b8d94' stroke-width='1.1'><path d='M0.8 4.2 L6 8.3 L0.8 12.5'/></svg><span style='left:118.5px;letter-spacing:0.23px;'>segment</span><svg style='left:176px;top:3px' width='8' height='16' viewBox='0 0 8 16' fill='none' stroke='#8b8d94' stroke-width='1.1'><path d='M0.8 4.2 L6 8.3 L0.8 12.5'/></svg><span style='left:186.6px;letter-spacing:0.41px;'>lib</span><svg style='left:206.5px;top:3px' width='8' height='16' viewBox='0 0 8 16' fill='none' stroke='#8b8d94' stroke-width='1.1'><path d='M0.8 4.2 L6 8.3 L0.8 12.5'/></svg><span style='left:216.8px;letter-spacing:0.34px;'>module</span><svg style='left:267.5px;top:3px' width='8' height='16' viewBox='0 0 8 16' fill='none' stroke='#8b8d94' stroke-width='1.1'><path d='M0.8 4.2 L6 8.3 L0.8 12.5'/></svg><span class='js' style='left:280px'>JS</span><span style='left:300.0px;letter-spacing:0.08px;'>DictTokenizer.js</span><svg style='left:397.5px;top:3px' width='8' height='16' viewBox='0 0 8 16' fill='none' stroke='#8b8d94' stroke-width='1.1'><path d='M0.8 4.2 L6 8.3 L0.8 12.5'/></svg><svg style='left:409px;top:3px' width='16' height='16' viewBox='0 0 16 16' fill='none' stroke='#75beff' stroke-width='1.2'><path d='M3.6 3.5 H1.2 V12.5 H3.6 M12.4 3.5 H14.8 V12.5 H12.4'/><path d='M5 6.6 L9.5 5.2 L11.2 6.4 L11.2 9.6 L6.8 11 L5 9.8 Z M5 6.6 L6.8 7.8 L11.2 6.4 M6.8 7.8 V11' stroke-width='1'/></svg><span style='left:430.5px;letter-spacing:0.28px;'>matchWord</span></div>
<div class='sh' style='left:0;top:41px;width:811px'></div></div>
<div id='red'></div>
</body></html>
